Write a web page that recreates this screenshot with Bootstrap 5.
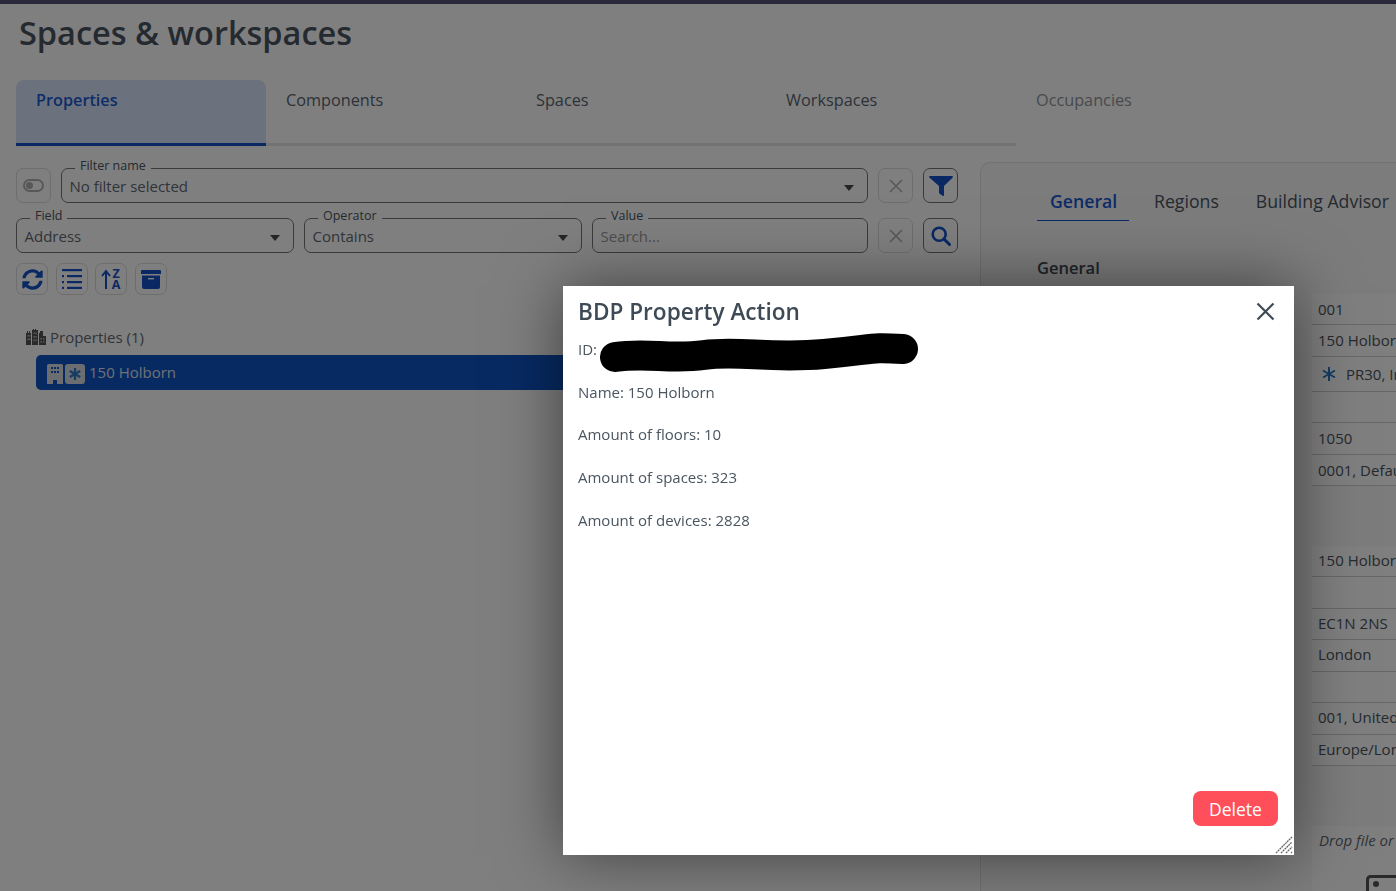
<!DOCTYPE html>
<html lang="en">
<head>
    <meta charset="UTF-8">
    <title>Spaces &amp; workspaces</title>
    <link href="https://cdn.jsdelivr.net/npm/bootstrap@5.3.0/dist/css/bootstrap.min.css" rel="stylesheet">
    <style>
        html, body { height: 891px; overflow: hidden; }
        body { font-family: "Open Sans", "Liberation Sans", sans-serif; font-size: 15px; color: #4a5460; background: #fff; }
        .top-strip { height: 4px; background: #545474; }
        .page-wrap { padding: 0 0 0 16px; width: 1396px; }
        .page-title { font-size: 32.5px; font-weight: 600; line-height: 44px; margin: 7px 0 25px 3px; color: #4a5460; }
        .main-tabs { width: 1000px; height: 66px; border-bottom: 3px solid #e6e6e6; }
        .main-tab { width: 250px; flex: none; height: 66px; padding: 9px 20px; font-size: 16.25px; line-height: 22px; color: #5a6470; }
        .main-tab.is-active { background: #d8e5fa; color: #1a5ad2; font-weight: 600; border-bottom: 3px solid #1250c8; border-radius: 8px 8px 0 0; }
        .main-tab.is-muted { color: #8f959c; }
        .split { width: 1380px; }
        .left-side { width: 942px; flex: none; padding-top: 22px; }
        .filter-row { height: 35px; margin-bottom: 15px; gap: 10px; }
        .sq-btn { width: 35px; height: 35px; flex: none; padding: 0; display: flex; align-items: center; justify-content: center; border: 1px solid #777; border-radius: 7px; background: #fff; }
        .sq-btn.is-off { border-color: #dcdcdc; }
        .tool-btn { width: 32px; height: 32px; flex: none; display: flex; align-items: center; justify-content: center; border: 1px solid #dcdcdc; border-radius: 7px; background: #fff; }
        .tool-tight { margin-right: 7px; }
        .legend-field { position: relative; height: 35px; border: 1px solid #777; border-radius: 7px; padding: 6px 7.5px; font-size: 15px; line-height: 22px; color: #5f6872; min-width: 0; }
        .legend-field .legend-text { position: absolute; top: -12px; left: 13px; padding: 0 5px; background: linear-gradient(transparent 50%, #fff 50%); font-size: 12.5px; line-height: 17px; color: #4a5460; }
        .legend-field .drop-arrow { position: absolute; right: 13px; top: 16px; width: 0; height: 0; border-left: 5px solid transparent; border-right: 5px solid transparent; border-top: 6px solid #4a4a4a; }
        .legend-field.is-empty { color: #9a9a9a; }
        .field-w { width: 278px; flex: none; }
        .tool-row { margin-top: -5px; }
        .tree-head { margin: 27px 0 0 10px; height: 33px; padding-bottom: 4px; line-height: 22px; color: #5f6872; gap: 4px; font-size: 15px; }
        .tree-item { margin-left: 20px; height: 35px; background: #0e54c6; border-radius: 5px; color: #dfe3e9; padding-left: 11px; gap: 2px; font-size: 15px; line-height: 20px; }
        .tree-item svg { margin-top: 3px; }
        .tree-label { margin: 0 0 2px 2px; }
        .right-side { position: relative; width: 500px; flex: none; margin: 16px 0 0 22px; height: 760px; border: 1px solid #e2e2e2; border-radius: 10px 0 0 0; border-right: 0; background: #f8f8f8; padding: 0 0 0 56px; }
        .sub-tabs { gap: 25px; height: 57px; font-size: 17.7px; line-height: 24px; color: #4a5460; padding-top: 26px; }
        .sub-tab { padding: 0 0 6px; height: 32px; white-space: nowrap; }
        .sub-tab.is-active { color: #1a5ad2; font-weight: 600; border-bottom: 1px solid #1250c8; padding: 0 13px; width: 92px; text-align: center; }
        .sub-tab-last { margin-left: 12px; }
        .sec-title { font-size: 16.5px; font-weight: 600; line-height: 24px; margin: 36px 0 0 0; color: #3f4853; }
        .value-list { margin: 14px 0 0 275px; width: 200px; font-size: 15px; color: #4a5460; }
        .value-row { background: #fff; border-bottom: 1px solid #cfcfcf; padding: 0 6px; line-height: 31px; white-space: nowrap; overflow: hidden; }
        .value-gap { height: 60px; }
        .value-gap ~ .value-row { line-height: 28px; }
        .h31 { height: 31px; } .h32 { height: 32px; } .h35 { height: 35px; line-height: 36px; }
        .pr-star { margin-right: 10px; margin-left: 4px; }
        .drop-zone { margin: 60px 0 0 275px; width: 200px; height: 120px; background: #fff; padding: 3px 7px; font-style: italic; font-size: 15px; color: #5f6872; white-space: nowrap; overflow: hidden; }
        .drop-icon { position: absolute; left: 385px; top: 712px; }
        .prop-dialog { position: absolute; z-index: 1060; left: 563px; top: 286px; width: 731px; height: 569px; background: #fff; box-shadow: 0 0 60px rgba(0, 0, 0, .5); padding: 0 15px; color: #4a5560; }
        .prop-dialog-title { font-size: 22.6px; font-weight: 600; line-height: 33px; margin: 9px 0 0; color: #3f4a57; }
        .prop-line { font-size: 15px; line-height: 21px; margin: 0 0 21.7px; }
        .prop-lines { padding-top: 11px; }
        .close-x { position: absolute; right: 19px; top: 16px; padding: 0; border: 0; background: none; line-height: 0; }
        .blob { position: absolute; left: 36px; top: 46px; }
        .delete-btn { position: absolute; right: 16px; bottom: 29px; width: 85px; height: 35px; padding: 1px 0 0; background: #ff4f5b; border: 0; border-radius: 8px; color: #fff; font-size: 17.5px; line-height: 35px; }
        .grip { position: absolute; right: 1px; bottom: 1px; line-height: 0; }
    </style>
</head>
<body>
    <div class="top-strip"></div>
    <div class="page-wrap">
        <h1 class="page-title">Spaces &amp; workspaces</h1>

        <!-- Main tabs -->
        <div class="main-tabs d-flex">
            <div class="main-tab is-active">Properties</div>
            <div class="main-tab">Components</div>
            <div class="main-tab">Spaces</div>
            <div class="main-tab">Workspaces</div>
            <div class="main-tab is-muted">Occupancies</div>
        </div>

        <div class="split d-flex">
            <!-- Filter + tree -->
            <div class="left-side">
                <div class="filter-row d-flex">
                    <div class="sq-btn is-off">
                        <svg width="21" height="13" viewBox="0 0 21 13"><rect x="1" y="1" width="19" height="11" rx="5.5" fill="none" stroke="#b0b0b0" stroke-width="2"/><circle cx="6.5" cy="6.5" r="3.5" fill="#b0b0b0"/></svg>
                    </div>
                    <div class="legend-field flex-grow-1">
                        <span class="legend-text">Filter name</span>No filter selected<span class="drop-arrow"></span>
                    </div>
                    <div class="sq-btn is-off">
                        <svg width="14" height="14" viewBox="0 0 14 14"><path d="M1 1l12 12M13 1L1 13" stroke="#b0b0b0" stroke-width="1.6"/></svg>
                    </div>
                    <div class="sq-btn">
                        <svg width="24" height="22" viewBox="0 0 24 22"><path d="M1 1h22a1 1 0 0 1 .7 1.6L15 11v9a1 1 0 0 1-1.6.8l-3-2.3a1 1 0 0 1-.4-.8V11L.3 2.6A1 1 0 0 1 1 1z" fill="#1250c8"/></svg>
                    </div>
                </div>
                <div class="filter-row d-flex">
                    <div class="legend-field field-w"><span class="legend-text">Field</span>Address<span class="drop-arrow"></span></div>
                    <div class="legend-field field-w"><span class="legend-text">Operator</span>Contains<span class="drop-arrow"></span></div>
                    <div class="legend-field is-empty flex-grow-1"><span class="legend-text">Value</span>Search...</div>
                    <div class="sq-btn is-off">
                        <svg width="14" height="14" viewBox="0 0 14 14"><path d="M1 1l12 12M13 1L1 13" stroke="#b0b0b0" stroke-width="1.6"/></svg>
                    </div>
                    <div class="sq-btn">
                        <svg width="20" height="20" viewBox="0 0 20 20"><circle cx="8.2" cy="8.2" r="6.5" fill="none" stroke="#1250c8" stroke-width="2.6"/><path d="M13 13l5.5 5.5" stroke="#1250c8" stroke-width="3" stroke-linecap="round"/></svg>
                    </div>
                </div>
                <div class="tool-row d-flex">
                    <div class="tool-btn me-2"><svg width="21" height="21" viewBox="0 0 512 512"><path fill="#1250c8" d="M370.72 133.28C339.458 104.008 298.888 87.962 255.848 88c-77.458.068-144.328 53.178-162.791 126.85-1.344 5.363-6.122 9.15-11.651 9.15H24.103c-7.498 0-13.194-6.807-11.807-14.176C33.933 94.924 134.813 8 256 8c66.448 0 126.791 26.136 171.315 68.685L463.03 40.97C478.149 25.851 504 36.559 504 57.941V192c0 13.255-10.745 24-24 24H345.941c-21.382 0-32.09-25.851-16.971-40.971l41.75-41.749zM32 296h134.059c21.382 0 32.09 25.851 16.971 40.971l-41.75 41.75c31.262 29.273 71.835 45.319 114.876 45.28 77.418-.07 144.315-53.144 162.787-126.849 1.344-5.363 6.122-9.15 11.651-9.15h57.304c7.498 0 13.194 6.807 11.807 14.176C478.067 417.076 377.187 504 256 504c-66.448 0-126.791-26.136-171.315-68.685L48.97 471.03C33.851 486.149 8 475.441 8 454.059V320c0-13.255 10.745-24 24-24z"/></svg></div>
                    <div class="tool-btn tool-tight"><svg width="20" height="20" viewBox="0 0 20 20" fill="#1250c8"><rect x="0" y="0" width="20" height="2.2"/><rect x="0" y="6" width="2" height="2.2"/><rect x="5" y="6" width="15" height="2.2"/><rect x="0" y="12" width="2" height="2.2"/><rect x="5" y="12" width="15" height="2.2"/><rect x="0" y="17.8" width="2" height="2.2"/><rect x="5" y="17.8" width="15" height="2.2"/></svg></div>
                    <div class="tool-btn me-2"><svg width="21" height="20" viewBox="0 0 21 20" overflow="visible"><path d="M5 20V3M1 7l4-5 4 5" fill="none" stroke="#1250c8" stroke-width="2"/><text x="15" y="9" font-family="Open Sans, sans-serif" font-size="12.5" font-weight="700" text-anchor="middle" fill="#1250c8">Z</text><text x="15" y="20" font-family="Open Sans, sans-serif" font-size="12.5" font-weight="700" text-anchor="middle" fill="#1250c8">A</text></svg></div>
                    <div class="tool-btn"><svg width="20" height="19" viewBox="0 0 20 19"><path d="M0 1a1 1 0 0 1 1-1h18a1 1 0 0 1 1 1v3H0z" fill="#1250c8"/><path d="M1 5.5h18V17a2 2 0 0 1-2 2H3a2 2 0 0 1-2-2z" fill="#1250c8"/><rect x="7" y="8" width="6" height="1.4" fill="#fff"/></svg></div>
                </div>
                <div class="tree-head d-flex align-items-center">
                    <svg width="20" height="16" viewBox="0 0 20 16" fill="#555"><path d="M0 16V4h1V2h1v2h1V2h1v2h1v12zM6 16V1h1V0h1v1h1V0h1v1h2v15zM13 16V4h1V2h3v5h3v9z"/><g fill="#bbb"><rect x="1.5" y="6" width="1.3" height="1.6"/><rect x="3.3" y="6" width="1.3" height="1.6"/><rect x="1.5" y="9.5" width="1.3" height="1.6"/><rect x="3.3" y="9.5" width="1.3" height="1.6"/><rect x="7.5" y="3.5" width="1.3" height="1.6"/><rect x="9.5" y="3.5" width="1.3" height="1.6"/><rect x="7.5" y="7" width="1.3" height="1.6"/><rect x="9.5" y="7" width="1.3" height="1.6"/><rect x="7.5" y="10.5" width="1.3" height="1.6"/><rect x="9.5" y="10.5" width="1.3" height="1.6"/><rect x="14.5" y="9" width="1.3" height="1.6"/><rect x="17" y="9" width="1.3" height="1.6"/><rect x="14.5" y="12" width="1.3" height="1.6"/><rect x="17" y="12" width="1.3" height="1.6"/></g></svg>
                    <span>Properties (1)</span>
                </div>
                <div class="tree-item d-flex align-items-center">
                    <svg width="16" height="20" viewBox="0 0 16 20"><path d="M1.5 0h13A1.5 1.5 0 0 1 16 1.5V20H10v-4H6v4H0V1.5A1.5 1.5 0 0 1 1.5 0z" fill="#d6dbe2"/><g fill="#0e54c6"><rect x="4" y="3" width="2" height="2"/><rect x="7" y="3" width="2" height="2"/><rect x="10" y="3" width="2" height="2"/><rect x="4" y="7" width="2" height="2"/><rect x="7" y="7" width="2" height="2"/><rect x="10" y="7" width="2" height="2"/></g></svg>
                    <svg width="20" height="20" viewBox="0 0 20 20"><rect width="20" height="20" rx="3" fill="#d6dbe2"/><path d="M10 4v12M4.8 7l10.4 6M15.2 7L4.8 13" stroke="#2a78c8" stroke-width="2.2"/></svg>
                    <span class="tree-label">150 Holborn</span>
                </div>
            </div>

            <!-- Detail panel -->
            <div class="right-side">
                <div class="sub-tabs d-flex">
                    <div class="sub-tab is-active">General</div>
                    <div class="sub-tab">Regions</div>
                    <div class="sub-tab sub-tab-last">Building Advisor</div>
                </div>
                <div class="sec-title">General</div>
                <div class="value-list">
                    <div class="value-row h31">001</div>
                    <div class="value-row h32">150 Holborn</div>
                    <div class="value-row h35 d-flex align-items-center"><svg class="pr-star" width="14" height="14" viewBox="0 0 14 14"><path d="M7 0v14M1 3.5l12 7M13 3.5l-12 7" stroke="#2a78c8" stroke-width="2"/></svg><span>PR30, Inverter</span></div>
                    <div class="value-row h31"></div>
                    <div class="value-row h32">1050</div>
                    <div class="value-row h31">0001, Default</div>
                    <div class="value-gap"></div>
                    <div class="value-row h31">150 Holborn</div>
                    <div class="value-row h32"></div>
                    <div class="value-row h31">EC1N 2NS</div>
                    <div class="value-row h32">London</div>
                    <div class="value-row h31"></div>
                    <div class="value-row h32">001, United Kingdom</div>
                    <div class="value-row h31">Europe/London</div>
                </div>
                <div class="drop-zone">Drop file or click</div>
                <svg class="drop-icon" width="40" height="30" viewBox="0 0 40 30"><rect x="1.5" y="1.5" width="37" height="27" rx="3" fill="none" stroke="#555" stroke-width="3"/><circle cx="10" cy="9" r="3" fill="#555"/></svg>
            </div>
        </div>
    </div>

    <!-- Dialog -->
    <div class="modal-backdrop show"></div>
    <div class="prop-dialog">
        <h2 class="prop-dialog-title">BDP Property Action</h2>
        <button class="close-x" type="button" aria-label="Close">
            <svg width="19" height="19" viewBox="0 0 19 19"><path d="M1.5 1.5l16 16M17.5 1.5l-16 16" stroke="#3f4a57" stroke-width="2.2"/></svg>
        </button>
        <svg class="blob" width="322" height="42" viewBox="0 0 322 42"><path d="M16 25C50 20 70 28 105 23S170 27 225 22S268 15 304 17" fill="none" stroke="#000" stroke-width="30" stroke-linecap="round"/></svg>
        <div class="prop-lines">
            <p class="prop-line">ID:</p>
            <p class="prop-line">Name: 150 Holborn</p>
            <p class="prop-line">Amount of floors: 10</p>
            <p class="prop-line">Amount of spaces: 323</p>
            <p class="prop-line">Amount of devices: 2828</p>
        </div>
        <button class="delete-btn" type="button">Delete</button>
        <svg class="grip" width="18" height="18" viewBox="0 0 18 18"><path d="M1 17L17 1M6 17L17 6M11 17l6-6M16 17l1-1" stroke="#666" stroke-width="1.3" stroke-dasharray="2 .6"/></svg>
    </div>

    <script src="https://cdn.jsdelivr.net/npm/bootstrap@5.3.0/dist/js/bootstrap.bundle.min.js"></script>
</body>
</html>
